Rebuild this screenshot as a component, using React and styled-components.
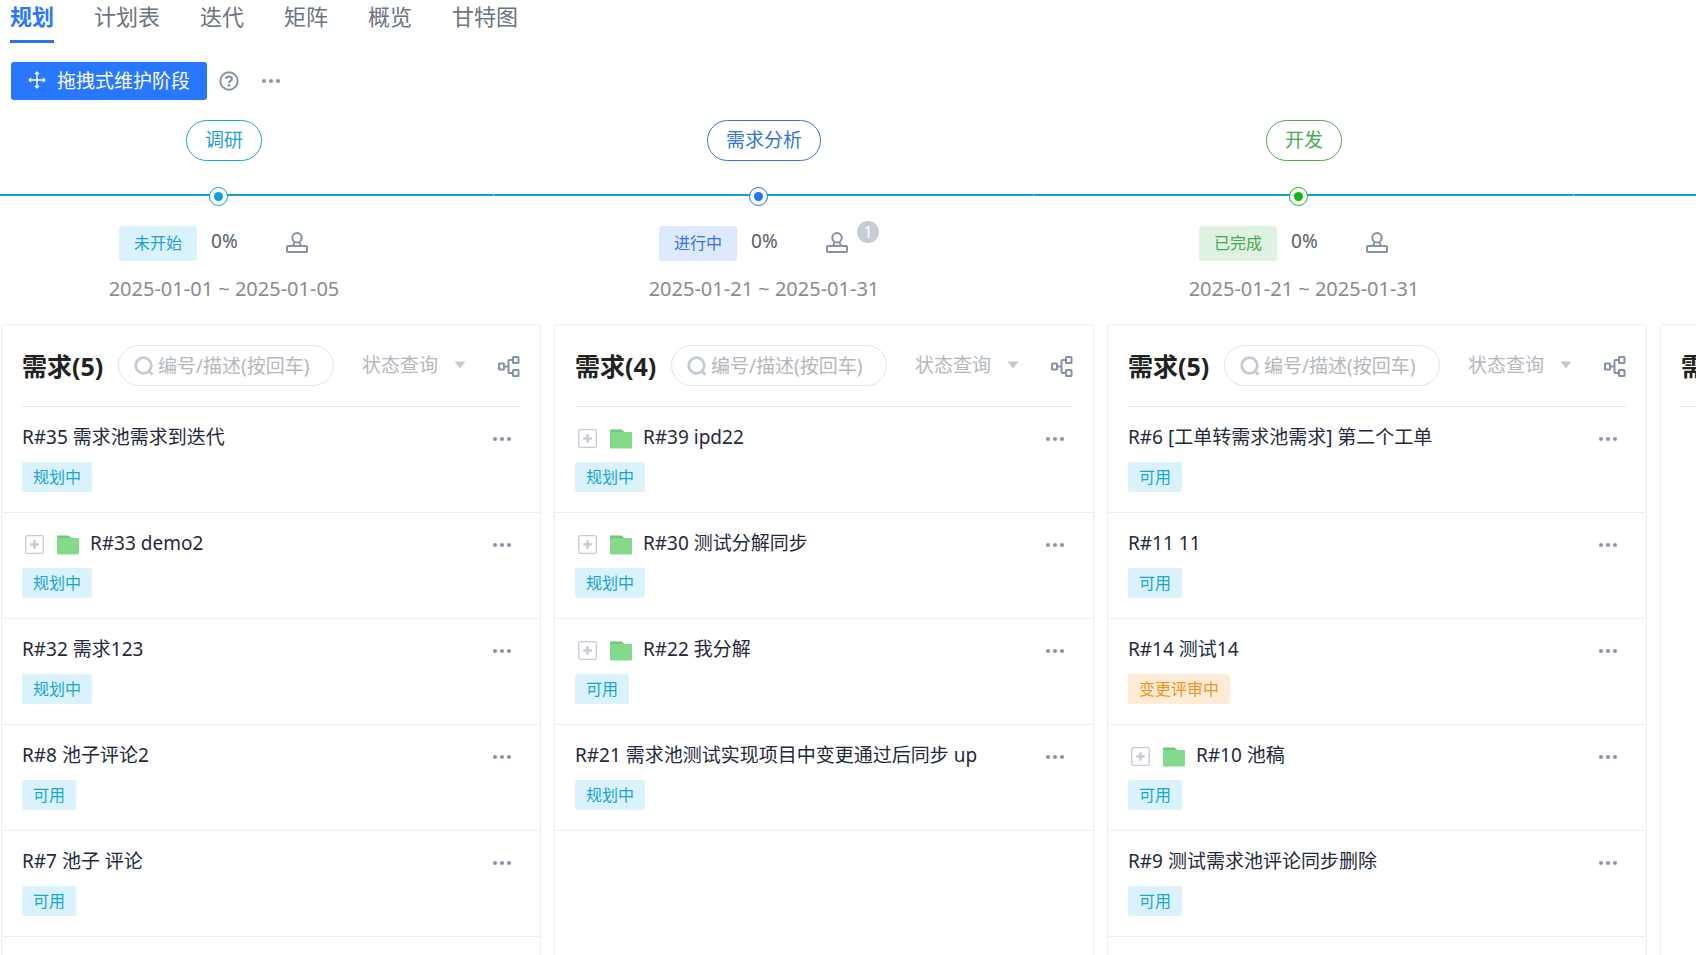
import React, { useState } from 'react';
import styled, { createGlobalStyle } from 'styled-components';

const GlobalStyle = createGlobalStyle`
  * {
    box-sizing: border-box;
  }

  body {
    margin: 0;
    background: #fff;
  }

  body, button, input, select {
    font-family: 'Noto Sans', 'Noto Sans CJK SC', sans-serif;
    font-size: 19px;
  }
`;

const Page = styled.div`
  display: flex;
  flex-direction: column;
  height: 100vh;
  overflow: hidden;
`;

const Tabs = styled.nav`
  display: flex;
  gap: 40px;
  padding-left: 10px;
`;

const Tab = styled.a`
  padding-bottom: 8px;
  border-bottom: 3px solid ${(p) => (p.$active ? '#2f74e8' : 'transparent')};
  color: ${(p) => (p.$active ? '#2878ff' : '#6b7580')};
  font-size: 22px;
  font-weight: ${(p) => (p.$active ? 700 : 400)};
  line-height: 32px;
  text-decoration: none;
`;

const Toolbar = styled.div`
  display: flex;
  align-items: center;
  margin-top: 19px;
  padding-left: 11px;
`;

const PrimaryButton = styled.button`
  display: flex;
  align-items: center;
  gap: 11px;
  height: 38px;
  padding: 0 17px 2px;
  border: none;
  border-radius: 3px;
  background: #2878ff;
  color: #fff;
  cursor: pointer;
`;

const IconButton = styled.button`
  display: flex;
  flex: none;
  padding: 0;
  border: none;
  background: none;
  color: #8693a6;
  cursor: pointer;
`;

const ToolbarIcons = styled.div`
  display: flex;
  align-items: center;
  gap: 23px;
  margin-left: 12px;
`;

const Stages = styled.div`
  display: flex;
  flex: none;
  margin: 20px 0 22px -46px;
`;

const Stage = styled.section`
  display: flex;
  flex: 0 0 540px;
  flex-direction: column;
  align-items: center;
`;

const StageName = styled.div`
  height: 41px;
  padding: 0 18px;
  border: 1px solid ${(p) => p.$color};
  border-radius: 21px;
  color: ${(p) => p.$color};
  line-height: 39px;
`;

const Axis = styled.div`
  display: flex;
  justify-content: center;
  align-self: stretch;
  height: 20px;
  margin-top: ${(p) => (p.$bare ? 67 : 26)}px;
  padding-right: 10px;
  border-right: 1px solid rgba(255, 255, 255, 0.4);
  background: linear-gradient(#18a0d4, #18a0d4) 0 7px / 100% 2px no-repeat border-box;
`;

const Dot = styled.span`
  display: flex;
  align-items: center;
  justify-content: center;
  width: 19px;
  height: 19px;
  border: 1px solid ${(p) => p.$color};
  border-radius: 50%;
  background: #fff;

  &::after {
    content: '';
    width: 9px;
    height: 9px;
    border-radius: 50%;
    background: ${(p) => p.$color};
  }
`;

const StageInfo = styled.div`
  display: flex;
  gap: 14px;
  width: 210px;
  height: 35px;
  margin-top: 19px;
`;

const StageStatus = styled.span`
  padding: 0 15px;
  border-radius: 3px;
  background: ${(p) => p.$bg};
  color: ${(p) => p.$color};
  font-size: 16px;
  line-height: 34px;
`;

const Percent = styled.span`
  flex: 1;
  color: #555e6b;
  line-height: 30px;
`;

const Owner = styled.span`
  position: relative;
  width: 43px;
  height: 22px;
  margin-top: 6px;
  color: #8693a6;
`;

const Badge = styled.span`
  position: absolute;
  top: -11px;
  right: -10px;
  width: 22px;
  height: 22px;
  border-radius: 50%;
  background: #c6cbd4;
  color: #fff;
  font-size: 16px;
  line-height: 22px;
  text-align: center;
`;

const StageDate = styled.div`
  margin-top: 15px;
  color: #8c8c8c;
  font-size: 20px;
  line-height: 26px;
`;

const Board = styled.main`
  display: flex;
  flex: 1;
  gap: 13px;
  min-height: 0;
  padding-left: 1px;
`;

const Column = styled.section`
  flex: 0 0 540px;
  border: 1px solid #eceeef;
  border-bottom: none;
  border-radius: 4px 4px 0 0;
`;

const ColumnHeader = styled.header`
  display: flex;
  align-items: center;
  height: 82px;
  margin: 0 20px;
  border-bottom: 1px solid #e2e6e9;
`;

const ColumnTitle = styled.h2`
  flex: none;
  width: 96px;
  margin: 0;
  color: #222;
  font-size: 25px;
  line-height: 36px;
  white-space: nowrap;
`;

const SearchBox = styled.label`
  display: flex;
  align-items: center;
  gap: 4px;
  width: 216px;
  height: 41px;
  padding: 0 15px;
  border: 1px solid #dfe5e9;
  border-radius: 21px;
  color: #c3ccd6;
`;

const SearchInput = styled.input`
  flex: 1;
  min-width: 0;
  padding: 0;
  border: none;
  outline: none;
  background: none;
  color: #1f2a3c;

  &::placeholder {
    color: #b3b8be;
    opacity: 1;
  }
`;

const StatusFilter = styled.label`
  display: flex;
  align-items: center;
  gap: 15px;
  margin: 0 auto 2px 28px;
  color: #c3ccd6;
`;

const StatusSelect = styled.select`
  padding: 0;
  border: none;
  outline: none;
  appearance: none;
  background: none;
  color: #b3b8be;
`;

const Item = styled.article`
  padding: 18px 20px 20px;
  border-bottom: 1px solid #eceeef;
`;

const ItemHead = styled.div`
  display: flex;
  align-items: center;
  height: 25px;
  margin-bottom: 12px;
`;

const ItemLink = styled.a`
  flex: 1;
  color: #1f2a3c;
  line-height: 25px;
  text-decoration: none;
  white-space: nowrap;
`;

const Parent = styled.span`
  display: flex;
  align-items: center;
  gap: 13px;
  margin: 2px 11px 0 3px;
`;

const MoreButton = styled(IconButton)`
  margin: 3px 9px 0 0;
`;

const Tag = styled.span`
  display: inline-block;
  padding: 0 11px;
  border-radius: 3px;
  background: ${(p) => (p.$warn ? '#ffebd6' : '#d9f2fc')};
  color: ${(p) => (p.$warn ? '#f29422' : '#18a5d6')};
  font-size: 16px;
  line-height: 30px;
  vertical-align: top;
`;

const MoveIcon = () => (
   <svg width="18" height="18" viewBox="0 0 18 18" fill="none" stroke="currentColor" strokeWidth="1.4">
      <path d="M9 1.5v15M1.5 9h15" />
      <path d="M7 3.2 9 1.2l2 2M7 14.8l2 2 2-2M3.2 7l-2 2 2 2M14.8 7l2 2-2 2" />
   </svg>
);

const HelpIcon = () => (
   <svg width="20" height="20" viewBox="0 0 20 20" fill="none" stroke="currentColor">
      <circle cx="10" cy="10" r="8.7" strokeWidth="1.9" />
      <path d="M7.2 8.1c0-1.6 1.2-2.6 2.8-2.6s2.8 1 2.8 2.4c0 1.9-2.7 2-2.7 4" strokeWidth="2.2" />
      <circle cx="10.1" cy="14.3" r="1.3" fill="currentColor" stroke="none" />
   </svg>
);

const MoreIcon = () => (
   <svg width="18" height="6" viewBox="0 0 18 6" fill="currentColor">
      <circle cx="2" cy="3" r="2" />
      <circle cx="9" cy="3" r="2" />
      <circle cx="16" cy="3" r="2" />
   </svg>
);

const StampIcon = () => (
   <svg width="22" height="22" viewBox="0 0 22 22" fill="none" stroke="currentColor" strokeWidth="2" strokeLinejoin="round">
      <circle cx="11" cy="5.8" r="4.7" />
      <path d="M8.3 10.2c0 2-.8 3-2 4M13.7 10.2c0 2 .8 3 2 4" />
      <rect x="1" y="14" width="20" height="6" rx="1" />
   </svg>
);

const SearchIcon = () => (
   <svg width="20" height="20" viewBox="0 0 20 20" fill="none" stroke="currentColor" strokeWidth="2.8">
      <circle cx="9.5" cy="9.5" r="7.8" />
      <path d="M14.5 14.8l4 4" />
   </svg>
);

const CaretIcon = () => (
   <svg width="12" height="8" viewBox="0 0 12 8" fill="currentColor">
      <path d="M.5.5h11L6 7.5z" />
   </svg>
);

const TreeIcon = () => (
   <svg width="22" height="22" viewBox="0 0 22 22" fill="none" stroke="currentColor" strokeWidth="2">
      <rect x="1" y="8.5" width="5" height="6" rx=".5" />
      <rect x="15" y="2" width="5.5" height="6" rx=".5" />
      <rect x="15" y="15" width="5.5" height="6" rx=".5" />
      <path d="M6 11.5h4.5M15 5h-3.500q-1 0-1 1v11q0 1 1 1H15" />
   </svg>
);

const ExpandIcon = () => (
   <svg width="19" height="19" viewBox="0 0 19 19" fill="none" stroke="#c6ccd4">
      <rect x=".7" y=".7" width="17.6" height="17.6" rx="1.5" strokeWidth="1.3" />
      <path d="M9.5 5.2v8.6M5.2 9.5h8.6" strokeWidth="2.6" />
   </svg>
);

const FolderIcon = () => (
   <svg width="22" height="20" viewBox="0 0 22 20">
      <path d="M0 .5h11.500L15 3.500H0z" fill="#6fc97a" />
      <path d="M0 3h22v15q0 1.500-1.500 1.500h-19Q0 19.500 0 18z" fill="#84d98a" />
   </svg>
);

const tabs = ['规划', '计划表', '迭代', '矩阵', '概览', '甘特图'];

const stages = [
   { name: '调研', color: '#1f9fd8', dot: '#0aa2dc', status: '未开始', bg: '#d9f2fc', percent: '0%', date: '2025-01-01 ~ 2025-01-05' },
   { name: '需求分析', color: '#3474e0', dot: '#2474f5', status: '进行中', bg: '#dde9fe', percent: '0%', badge: 1, date: '2025-01-21 ~ 2025-01-31' },
   { name: '开发', color: '#49a94f', dot: '#0fb90f', status: '已完成', bg: '#dff2e1', percent: '0%', date: '2025-01-21 ~ 2025-01-31' },
];

const columns = [
   [
      { title: 'R#35 需求池需求到迭代', status: '规划中' },
      { title: 'R#33 demo2', status: '规划中', parent: true },
      { title: 'R#32 需求123', status: '规划中' },
      { title: 'R#8 池子评论2', status: '可用' },
      { title: 'R#7 池子 评论', status: '可用' },
   ],
   [
      { title: 'R#39 ipd22', status: '规划中', parent: true },
      { title: 'R#30 测试分解同步', status: '规划中', parent: true },
      { title: 'R#22 我分解', status: '可用', parent: true },
      { title: 'R#21 需求池测试实现项目中变更通过后同步 up', status: '规划中' },
   ],
   [
      { title: 'R#6 [工单转需求池需求] 第二个工单', status: '可用' },
      { title: 'R#11 11', status: '可用' },
      { title: 'R#14 测试14', status: '变更评审中', warn: true },
      { title: 'R#10 池稿', status: '可用', parent: true },
      { title: 'R#9 测试需求池评论同步删除', status: '可用' },
   ],
];

const StageNode = ({ stage }) => (
   <Stage>
      <StageName $color={stage.color}>{stage.name}</StageName>
      <Axis>
         <Dot $color={stage.dot} />
      </Axis>
      <StageInfo>
         <StageStatus $color={stage.color} $bg={stage.bg}>{stage.status}</StageStatus>
         <Percent>{stage.percent}</Percent>
         <Owner>
            <StampIcon />
            {stage.badge && <Badge>{stage.badge}</Badge>}
         </Owner>
      </StageInfo>
      <StageDate>{stage.date}</StageDate>
   </Stage>
);

const RequirementColumn = ({ items }) => {
   const [keyword, setKeyword] = useState('');

   return (
      <Column>
         <ColumnHeader>
            <ColumnTitle>需求({items.length})</ColumnTitle>
            <SearchBox>
               <SearchIcon />
               <SearchInput
                  value={keyword}
                  placeholder="编号/描述(按回车)"
                  onChange={(e) => setKeyword(e.target.value)}
               />
            </SearchBox>
            <StatusFilter>
               <StatusSelect aria-label="状态查询">
                  <option>状态查询</option>
               </StatusSelect>
               <CaretIcon />
            </StatusFilter>
            <IconButton aria-label="分解">
               <TreeIcon />
            </IconButton>
         </ColumnHeader>
         {items.map((item) => (
            <Item key={item.title}>
               <ItemHead>
                  {item.parent && (
                     <Parent>
                        <IconButton aria-label="展开">
                           <ExpandIcon />
                        </IconButton>
                        <FolderIcon />
                     </Parent>
                  )}
                  <ItemLink href="#">{item.title}</ItemLink>
                  <MoreButton aria-label="更多">
                     <MoreIcon />
                  </MoreButton>
               </ItemHead>
               <Tag $warn={item.warn}>{item.status}</Tag>
            </Item>
         ))}
      </Column>
   );
};

const App = () => {
   const [active, setActive] = useState(tabs[0]);

   return (
      <Page>
         <GlobalStyle />
         <Tabs>
            {tabs.map((tab) => (
               <Tab key={tab} href="#" $active={tab === active} onClick={() => setActive(tab)}>
                  {tab}
               </Tab>
            ))}
         </Tabs>
         <Toolbar>
            <PrimaryButton>
               <MoveIcon />
               拖拽式维护阶段
            </PrimaryButton>
            <ToolbarIcons>
               <IconButton aria-label="帮助">
                  <HelpIcon />
               </IconButton>
               <IconButton aria-label="更多">
                  <MoreIcon />
               </IconButton>
            </ToolbarIcons>
         </Toolbar>
         <Stages>
            {stages.map((stage) => (
               <StageNode key={stage.name} stage={stage} />
            ))}
            <Stage>
               <Axis $bare />
            </Stage>
         </Stages>
         <Board>
            {columns.map((items, index) => (
               <RequirementColumn key={index} items={items} />
            ))}
            <Column>
               <ColumnHeader>
                  <ColumnTitle>需求</ColumnTitle>
               </ColumnHeader>
            </Column>
         </Board>
      </Page>
   );
};

export default App;
